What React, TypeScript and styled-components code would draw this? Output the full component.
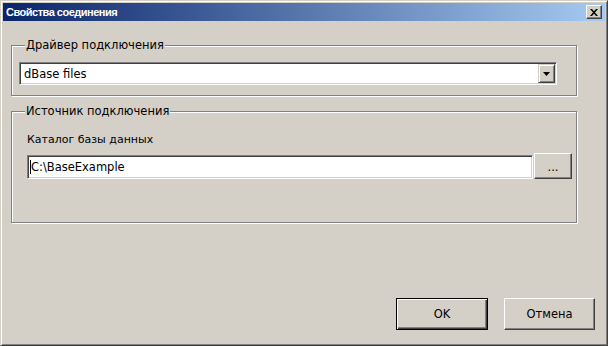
import styled, { createGlobalStyle } from "styled-components";

const GlobalStyle = createGlobalStyle`
  html, body {
    margin: 0;
    padding: 0;
    background: #d4d0c8;
  }
  body {
    font-family: "DejaVu Sans", "Liberation Sans", sans-serif;
    font-size: 11.5px;
    color: #000;
  }
`;

const Window = styled.div`
  width: 608px;
  height: 346px;
  box-sizing: border-box;
  border: 1px solid;
  border-color: #d4d0c8 #404040 #404040 #d4d0c8;
  box-shadow: inset 1px 1px #fff, inset -1px -1px #808080;
  padding: 2px;
  background: #d4d0c8;

  display: flex;
  flex-direction: column;
`;

const TitleBar = styled.div`
  height: 18px;
  flex: none;
  padding: 0 3px 0 2px;
  background: linear-gradient(to right, #0a246a, #a6caf0);

  display: flex;
  align-items: center;
  justify-content: space-between;
`;

const Title = styled.div`
  color: #fff;
  font-family: "Liberation Sans", Arial, sans-serif;
  font-weight: bold;
  font-size: 11px;
  letter-spacing: -0.5px;
  padding-left: 1px;
`;

const CloseButton = styled.div`
  width: 16px;
  height: 14px;
  box-sizing: border-box;
  background: #d4d0c8;
  border: 1px solid;
  border-color: #fff #404040 #404040 #fff;
  box-shadow: inset -1px -1px #808080;

  display: flex;
  align-items: center;
  justify-content: center;
`;

const Content = styled.div`
  flex: 1;
  padding: 24px 28px 0 8px;

  display: flex;
  flex-direction: column;
`;

const Group = styled.div<{ $padBottom: number }>`
  width: 566px;
  box-sizing: border-box;
  border: 1px solid #808080;
  box-shadow: inset 1px 1px #fff, 1px 1px #fff;
  padding: 0 19px ${(p) => p.$padBottom}px 7px;

  display: flex;
  flex-direction: column;

  & + & {
    margin-top: 15px;
  }
`;

const Legend = styled.div`
  align-self: flex-start;
  margin: -8px 0 0 6px;
  padding: 0 1px;
  height: 14px;
  line-height: 14px;
  background: #d4d0c8;
`;

const Sunken = styled.div<{ $width: number; $height: number }>`
  width: ${(p) => p.$width}px;
  height: ${(p) => p.$height}px;
  box-sizing: border-box;
  background: #fff;
  border: 1px solid;
  border-color: #808080 #fff #fff #808080;
  box-shadow: inset 1px 1px #404040, inset -1px -1px #d4d0c8;
  padding: 2px;

  display: flex;
  align-items: center;
`;

const ComboText = styled.div`
  flex: 1;
  padding-left: 2px;
`;

const DropButton = styled.div`
  width: 17px;
  height: 19px;
  margin-right: -1px;
  box-sizing: border-box;
  background: #d4d0c8;
  border: 1px solid;
  border-color: #d4d0c8 #404040 #404040 #d4d0c8;
  box-shadow: inset 1px 1px #fff, inset -1px -1px #808080;

  display: flex;
  align-items: center;
  justify-content: center;
`;

const Inner = styled.div`
  padding: 15px 0 0 8px;
  margin-right: -15px;

  display: flex;
  flex-direction: column;
`;

const FieldLabel = styled.div`
  height: 14px;
  line-height: 14px;
  font-size: 11px;
`;

const PathRow = styled.div`
  margin-top: 6px;

  display: flex;
  align-items: flex-end;
  gap: 1px;
`;

const Caret = styled.span`
  width: 1px;
  height: 14px;
  background: #000;
`;

const Button = styled.div<{ $default?: boolean }>`
  width: ${(p) => (p.$default ? 92 : 91)}px;
  height: 32px;
  box-sizing: border-box;
  background: #d4d0c8;
  border: 1px solid;
  border-color: ${(p) =>
    p.$default ? "#000" : "#fff #404040 #404040 #fff"};
  box-shadow: ${(p) =>
    p.$default
      ? "inset 1px 1px #fff, inset -1px -1px #404040, inset -2px -2px #808080"
      : "inset -1px -1px #808080"};

  display: flex;
  align-items: center;
  justify-content: center;
`;

const SmallButton = styled(Button)`
  width: 38px;
  height: 26px;
  padding-top: 2px;
`;

const Footer = styled.div`
  margin-top: auto;
  padding: 0 10px 13px 0;

  display: flex;
  justify-content: flex-end;
  gap: 16px;
`;

function App() {
  return (
    <>
      <GlobalStyle />
      <Window>
        <TitleBar>
          <Title>Свойства соединения</Title>
          <CloseButton>
            <svg width="8" height="7" viewBox="0 0 8 7">
              <path
                d="M0 0h2l2 2.2L6 0h2L5 3.5 8 7H6L4 4.8 2 7H0l3-3.5z"
                fill="#000"
              />
            </svg>
          </CloseButton>
        </TitleBar>
        <Content>
          <Group $padBottom={10}>
            <Legend>Драйвер подключения</Legend>
            <Sunken $width={538} $height={23} style={{ marginTop: 10 }}>
              <ComboText>dBase files</ComboText>
              <DropButton>
                <svg width="7" height="4" viewBox="0 0 7 4">
                  <path d="M0 0h7L3.5 4z" fill="#000" />
                </svg>
              </DropButton>
            </Sunken>
          </Group>
          <Group $padBottom={43}>
            <Legend>Источник подключения</Legend>
            <Inner>
              <FieldLabel>Каталог базы данных</FieldLabel>
              <PathRow>
                <Sunken $width={507} $height={24}>
                  <Caret />
                  <span>C:\BaseExample</span>
                </Sunken>
                <SmallButton>...</SmallButton>
              </PathRow>
            </Inner>
          </Group>
        </Content>
        <Footer>
          <Button $default>OK</Button>
          <Button>Отмена</Button>
        </Footer>
      </Window>
    </>
  );
}

export default App;
